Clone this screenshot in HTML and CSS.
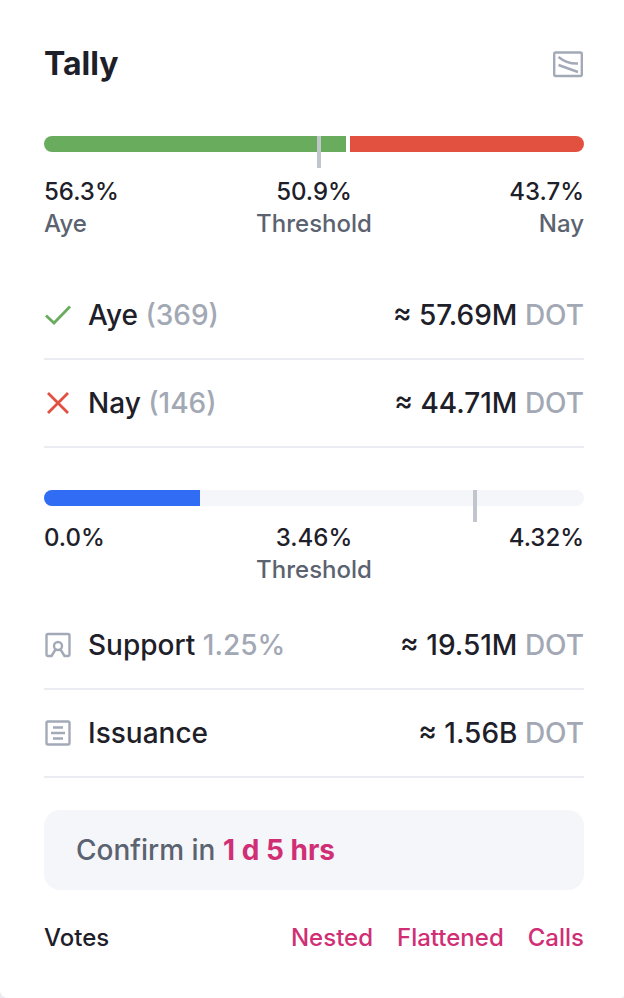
FILE: index.html
```html
<!DOCTYPE html>
<html lang="en">
<head>
  <meta charset="UTF-8" />
  <meta name="viewport" content="width=device-width, initial-scale=1" />
  <title>Tally</title>
  <link rel="stylesheet" href="styles.css">
</head>

<body>
  <main class="tally-card">
    <!-- Header -->
    <header class="card-header">
      <h1>Tally</h1>
      <button type="button" class="chart-button" aria-label="Show curves">
        <svg width="32" height="32" viewBox="0 0 32 32" fill="none" stroke="currentColor" stroke-width="2.400">
          <rect x="2.200" y="4.500" width="27.600" height="23.500" rx="1.500" />
          <path d="M6.500 9C12 13.500 17 16 26 15.500" />
          <path d="M6.500 17L26 24" />
        </svg>
      </button>
    </header>

    <!-- Aye / Nay split -->
    <section class="progress">
      <div class="bar bar-split">
        <div class="fill-aye" style="flex-grow: 56.3"></div>
        <div class="fill-nay" style="flex-grow: 43.7"></div>
        <span class="threshold" style="left: 50.9%"></span>
      </div>
      <div class="labels labels-spaced">
        <div>56.3%<span>Aye</span></div>
        <div>50.9%<span>Threshold</span></div>
        <div>43.7%<span>Nay</span></div>
      </div>
    </section>

    <ul class="rows">
      <li>
        <svg class="icon icon-aye" viewBox="0 0 28 28" fill="none" stroke="currentColor" stroke-width="2.800">
          <path d="M2 14.500L10 22L26 5.500" />
        </svg>
        <span class="name">Aye <span class="muted">(369)</span></span>
        <span class="value">≈ 57.69M <span class="muted">DOT</span></span>
      </li>
      <li>
        <svg class="icon icon-nay" viewBox="0 0 28 28" fill="none" stroke="currentColor" stroke-width="2.800">
          <path d="M4 4L24 24M24 4L4 24" />
        </svg>
        <span class="name">Nay <span class="muted">(146)</span></span>
        <span class="value">≈ 44.71M <span class="muted">DOT</span></span>
      </li>
    </ul>

    <!-- Support -->
    <section class="progress progress-support">
      <div class="bar bar-track">
        <div class="fill-support" style="width: 28.9%"></div>
        <span class="threshold" style="left: 79.8%"></span>
      </div>
      <div class="labels">
        <div>0.0%</div>
        <div>3.46%<span>Threshold</span></div>
        <div>4.32%</div>
      </div>
    </section>

    <ul class="rows">
      <li>
        <svg class="icon" viewBox="0 0 28 28" fill="none" stroke="currentColor" stroke-width="2.400" stroke-linejoin="round">
          <path d="M11.500 18.500L7.500 25H4A1.500 1.500 0 0 1 2.500 23.500V4.500A1.500 1.500 0 0 1 4 3H24A1.500 1.500 0 0 1 25.500 4.500V23.500A1.500 1.500 0 0 1 24 25H20.500L16.500 18.500" />
          <circle cx="14" cy="15" r="4" />
        </svg>
        <span class="name">Support <span class="muted">1.25%</span></span>
        <span class="value">≈ 19.51M <span class="muted">DOT</span></span>
      </li>
      <li>
        <svg class="icon" viewBox="0 0 28 28" fill="none" stroke="currentColor" stroke-width="2.400">
          <rect x="2.500" y="2.500" width="23" height="23" rx="1.500" />
          <path d="M9 8.500H19M7 14H21M9 19.500H19" />
        </svg>
        <span class="name">Issuance</span>
        <span class="value">≈ 1.56B <span class="muted">DOT</span></span>
      </li>
    </ul>

    <div class="confirm">Confirm in <strong>1 d 5 hrs</strong></div>

    <!-- Votes links -->
    <footer class="votes">
      <span>Votes</span>
      <nav class="vote-links">
        <a href="#nested">Nested</a>
        <a href="#flattened">Flattened</a>
        <a href="#calls">Calls</a>
      </nav>
    </footer>
  </main>
</body>
</html>
```

FILE: styles.css
```css
* {
  margin: 0;
  padding: 0;
  box-sizing: border-box;
}
body {
  background-color: #ebecf2;
  color: #1e2029;
  font-family: Inter, "Liberation Sans", sans-serif;
  font-size: 24px;
  font-weight: 500;
  line-height: 32px;
}
.tally-card {
  min-height: 100vh;
  padding: 44px 40px 44px 44px;
  background-color: #fff;
  border-radius: 0 0 4px 8px;
}
/* Header */
.card-header {
  display: flex;
  align-items: center;
  justify-content: space-between;
  margin-bottom: 52px;
}
.card-header h1 {
  font-size: 32px;
  font-weight: 700;
  line-height: 40px;
}
.chart-button {
  display: flex;
  border: none;
  background: none;
  color: #a3aab7;
  cursor: pointer;
}
/* Progress bars */
.bar {
  position: relative;
  display: flex;
  height: 16px;
  border-radius: 8px;
}
.bar-split {
  gap: 4px;
}
.bar-track {
  background-color: #f5f6fa;
}
.fill-aye,
.fill-nay {
  flex-basis: 0;
}
.fill-aye {
  background-color: #69ac5e;
  border-radius: 8px 0 0 8px;
}
.fill-nay {
  background-color: #e25140;
  border-radius: 0 8px 8px 0;
}
.fill-support {
  background-color: #316cf4;
  border-radius: 8px 0 0 8px;
}
.threshold {
  position: absolute;
  top: 0;
  width: 4px;
  height: 32px;
  margin-left: -2px;
  background-color: #c1c5ce;
}
.labels {
  display: grid;
  grid-template-columns: repeat(3, 1fr);
  margin-top: 16px;
}
.labels-spaced {
  margin-top: 24px;
}
.labels div:nth-child(2) {
  text-align: center;
}
.labels div:nth-child(3) {
  text-align: right;
}
.labels span {
  display: block;
  color: #5b6270;
}
.progress {
  margin-bottom: 32px;
}
.progress-support {
  margin-top: 42px;
  margin-bottom: 16px;
}
/* Tally rows */
.rows {
  list-style: none;
  font-size: 28px;
}
.rows li {
  display: flex;
  align-items: center;
  height: 88px;
  border-bottom: 2px solid #ebecf2;
}
.icon {
  width: 28px;
  height: 28px;
  margin-right: 16px;
  color: #a3aab7;
}
.icon-aye {
  color: #69ac5e;
}
.icon-nay {
  color: #e25140;
}
.value {
  margin-left: auto;
}
.muted {
  color: #a2a8b4;
}
/* Confirm box */
.confirm {
  margin-top: 32px;
  padding: 24px 32px;
  background-color: #f5f6fa;
  border-radius: 16px;
  color: #5b6270;
  font-size: 28px;
}
.confirm strong {
  color: #d02f75;
  font-weight: 700;
}
/* Votes links */
.votes {
  display: flex;
  justify-content: space-between;
  margin-top: 32px;
}
.vote-links {
  display: flex;
  gap: 24px;
}
.vote-links a {
  color: #d02f75;
  text-decoration: none;
}
```
